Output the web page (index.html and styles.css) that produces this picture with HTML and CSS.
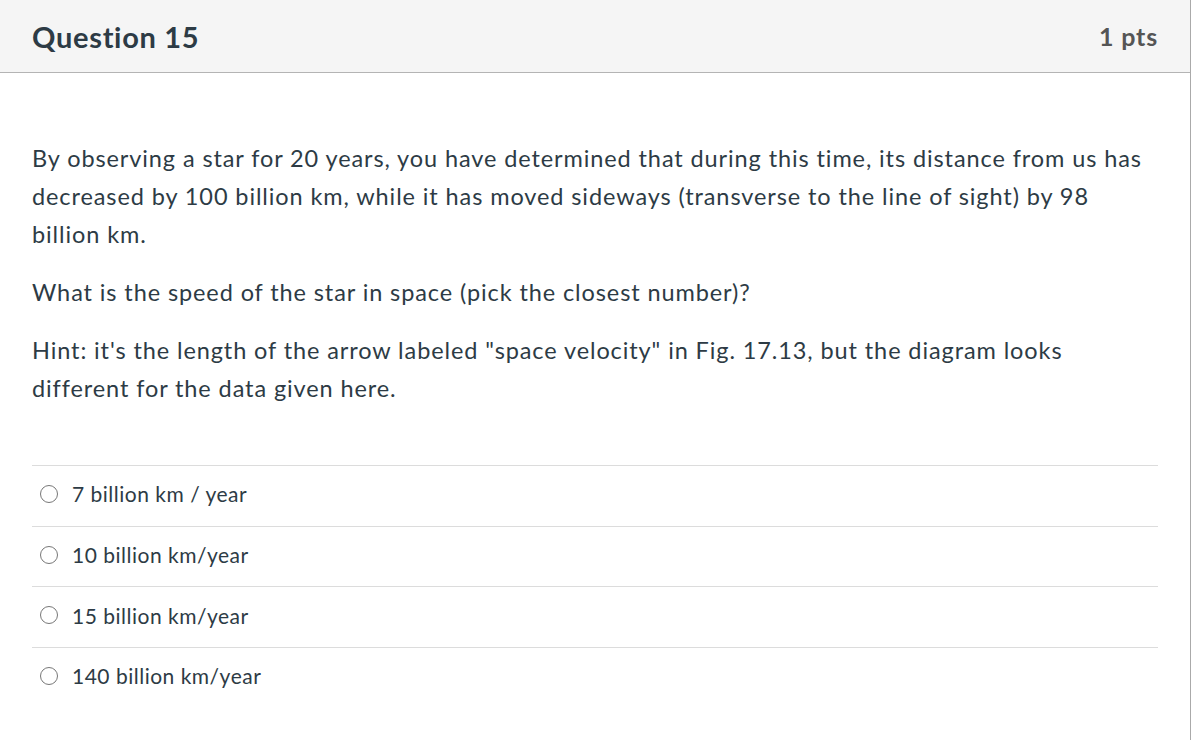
FILE: index.html
```html
<!DOCTYPE html>
<html>
<head>
<meta charset="utf-8">
<link rel="stylesheet" href="styles.css">
</head>
<body>
<div class="card">
  <div class="header">
    <h2 class="title">Question 15</h2>
    <span class="pts">1 pts</span>
  </div>
  <div class="body">
    <p>By observing a star for 20 years, you have determined that during this time, its distance from us has decreased by 100 billion km, while it has moved sideways (transverse to the line of sight) by 98 billion km.</p>
    <p>What is the speed of the star in space (pick the closest number)?</p>
    <p>Hint: it's the length of the arrow labeled "space velocity" in Fig. 17.13, but the diagram looks different for the data given here.</p>
    <div class="answers">
      <label class="answer"><span class="radio"></span><span>7 billion km / year</span></label>
      <label class="answer"><span class="radio"></span><span>10 billion km/year</span></label>
      <label class="answer"><span class="radio"></span><span>15 billion km/year</span></label>
      <label class="answer"><span class="radio"></span><span>140 billion km/year</span></label>
    </div>
  </div>
</div>
</body>
</html>
```

FILE: styles.css
```css
html, body {
  margin: 0;
  padding: 0;
  background: #fff;
}
body {
  font-family: Lato, "Open Sans", sans-serif;
  color: #2d3b45;
}
.card {
  width: 1191px;
  border-right: 1px solid #aaaaaa;
  height: 740px;
  box-sizing: border-box;
}
.header {
  height: 72px;
  background: #f5f5f5;
  border-bottom: 1px solid #b4b4b4;
  display: flex;
  align-items: center;
  justify-content: space-between;
  padding: 0 32px 0 32px;
}
.title {
  margin: 0;
  font-size: 29px;
  font-weight: 700;
  letter-spacing: 0.7px;
  color: #2d3b45;
}
.pts {
  font-size: 25px;
  font-weight: 700;
  letter-spacing: 0.8px;
  color: #555;
}
.body {
  padding: 66px 32px 0 32px;
}
.body p {
  margin: 0 0 20px 0;
  font-size: 23.5px;
  letter-spacing: 0.9px;
  line-height: 38px;
}
.answers {
  margin-top: 58px;
}
.answer {
  display: flex;
  align-items: center;
  height: 55.7px;
  padding: 0 0 4px 8px;
  border-top: 1px solid #dcdcdc;
  font-size: 21px;
  letter-spacing: 0.5px;
}
.radio {
  width: 18px;
  height: 18px;
  border: 1.5px solid #777;
  border-radius: 50%;
  box-sizing: border-box;
  margin-right: 14px;
  flex: none;
}
```
